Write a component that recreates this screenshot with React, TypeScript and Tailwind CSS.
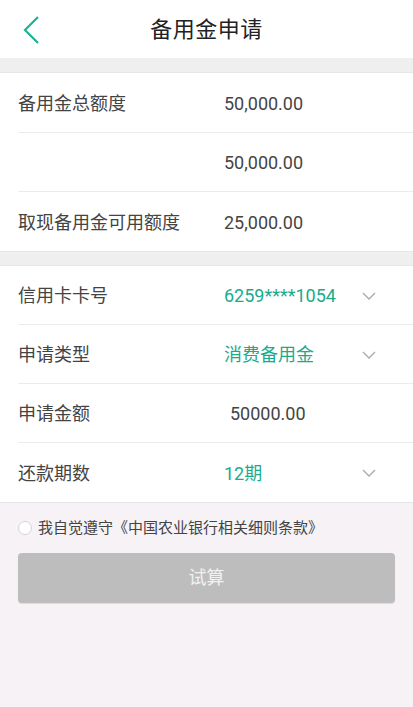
import React from "react";

const FONT = { fontFamily: "Roboto, 'Noto Sans CJK SC', 'Noto Sans', sans-serif" };

function Row({
  label,
  value,
  teal,
  chevron,
  last,
  tall,
  valueX = 224,
}: {
  label: string;
  value?: string;
  teal?: boolean;
  chevron?: boolean;
  last?: boolean;
  tall?: boolean;
  valueX?: number;
}) {
  return (
    <div className="pl-[18px]">
      <div
        className={`relative flex ${tall ? "h-[60px]" : "h-[59px]"} items-center pt-[1px] ${
          last ? "" : "border-b border-[#ebebeb]"
        }`}
      >
        <span className="text-[18px] text-[#444444]">{label}</span>
        {value && (
          <span
            className={`absolute text-[18px] ${teal ? "text-[#1aab8e]" : "text-[#444444]"}`}
            style={{ left: valueX - 18 }}
          >
            {value}
          </span>
        )}
        {chevron && (
          <svg width="14" height="8" viewBox="0 0 14 8" className="absolute left-[344px]">
            <path d="M1 1 L7 7 L13 1" fill="none" stroke="#a8a8a8" strokeWidth="1.3" />
          </svg>
        )}
      </div>
    </div>
  );
}

export default function App() {
  return (
    <div className="flex min-h-[707px] w-[413px] flex-col bg-[#f6f2f6]" style={FONT}>
      <div className="relative flex h-[58px] items-center justify-center bg-white">
        <svg width="20" height="30" viewBox="0 0 20 30" className="absolute left-[21px] top-[15px]">
          <path d="M17 2 L4 15 L17 28" fill="none" stroke="#1bb393" strokeWidth="2.2" />
        </svg>
        <span className="text-[22px] tracking-[0.5px] text-[#222222]">备用金申请</span>
      </div>
      <div className="h-[15px] border-b border-[#e6e6e6] bg-[#efefef]" />
      <div className="bg-white">
        <Row label="备用金总额度" value="50,000.00" tall />
        <Row label="" value="50,000.00" />
        <Row label="取现备用金可用额度" value="25,000.00" last />
      </div>
      <div className="h-[15px] border-y border-[#e6e6e6] bg-[#efefef]" />
      <div className="border-b border-[#e6e6e6] bg-white">
        <Row label="信用卡卡号" value="6259****1054" teal chevron />
        <Row label="申请类型" value="消费备用金" teal chevron />
        <Row label="申请金额" value="50000.00" valueX={230} />
        <Row label="还款期数" value="12期" teal chevron last />
      </div>
      <div className="flex items-center gap-[6px] pl-[18px] pt-[14px]">
        <span className="h-[14px] w-[14px] rounded-full border border-[#d4d4d4] bg-white" />
        <span className="text-[15px] text-[#444444]">我自觉遵守《中国农业银行相关细则条款》</span>
      </div>
      <div className="mx-[18px] mt-[13px] flex h-[50px] items-center justify-center rounded-[4px] bg-[#bdbdbd] shadow-[0_1px_1px_rgba(0,0,0,0.1)]">
        <span className="text-[18px] text-[#f2f2f2]">试算</span>
      </div>
    </div>
  );
}
